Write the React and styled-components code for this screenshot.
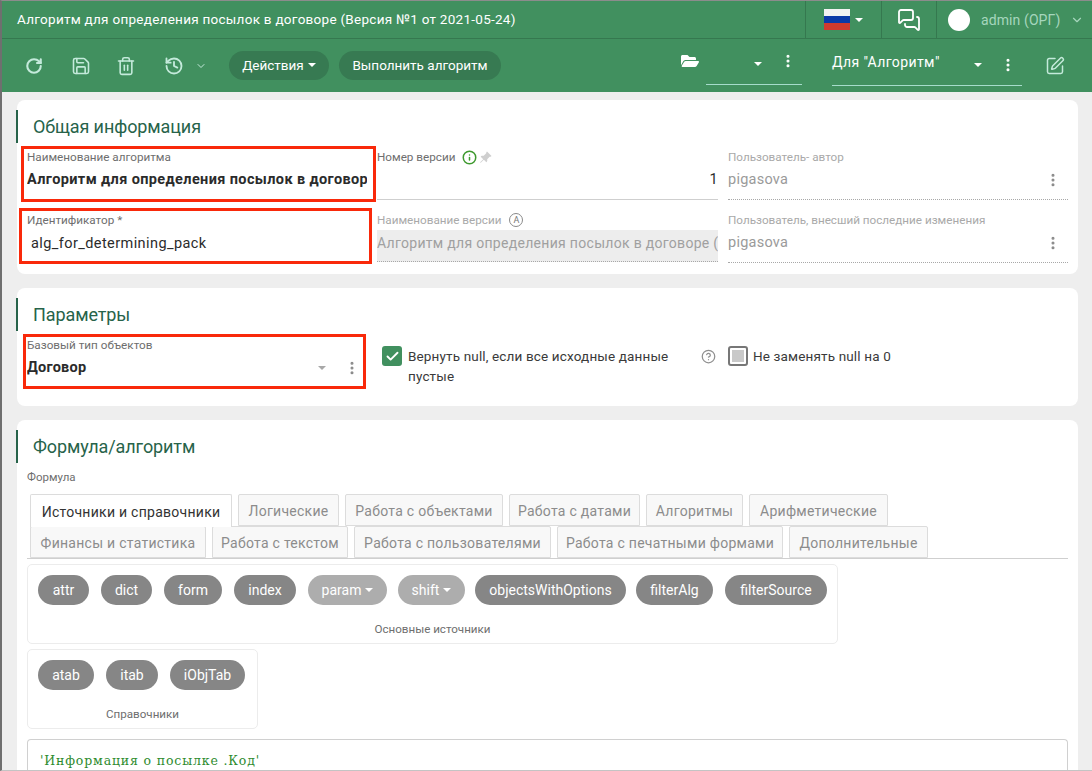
import React from 'react';
import styled, { createGlobalStyle } from 'styled-components';
import { RotateCw, Save, Trash2, History, ChevronDown, MessagesSquare, SquarePen, EllipsisVertical, Info, CircleHelp, Check } from 'lucide-react';
import { FaFolderOpen } from 'react-icons/fa';
import { BsPinAngleFill } from 'react-icons/bs';

const Global = createGlobalStyle`
  html, body { margin: 0; padding: 0; background: #eeeeee; }
  body { font-family: Roboto, "Noto Sans", sans-serif; overflow: hidden; }
  * { box-sizing: border-box; }
`;

const Page = styled.div`
  width: 1092px; height: 771px; overflow: hidden; background: #eeeeee;
  border-left: 2px solid #6f6f6f; border-top: 1px solid #8c8c8c; border-bottom: 1px solid #c4c4c4; margin: 0;
  display: flex; flex-direction: column;
`;
const Header = styled.header`
  background: #41905f; color: #fff; flex: none;
`;
const TitleRow = styled.div`
  height: 38px; display: flex; align-items: stretch; border-bottom: 1px solid #35784f; padding-left: 15px;
`;
const Title = styled.div`
  flex: 1; font-size: 13.5px; line-height: 36px; white-space: nowrap; letter-spacing: .27px;
`;
const TopCell = styled.div`
  width: ${p => p.$w}px; border-left: 1px solid #35784f; display: flex; align-items: center; padding-left: ${p => p.$pl || 0}px; flex: none;
`;
const Flag = styled.div`
  width: 26px; height: 21px; background: linear-gradient(#f2f2f2 0 33%, #0b3aa8 33% 66%, #d03a2e 66%);
`;
const Caret = styled.span`
  display: inline-block; width: 0; height: 0; border-left: 4px solid transparent; border-right: 4px solid transparent;
  border-top: 4px solid ${p => p.$c || '#fff'}; margin-left: ${p => p.$ml || 0}px;
`;
const Avatar = styled.div`
  width: 22px; height: 22px; border-radius: 50%; background: #fff; flex: none;
`;
const UserName = styled.span`
  color: #a6d6bd; font-size: 14px; margin-left: 11px; white-space: nowrap; letter-spacing: .1px;
`;
const UserChevron = styled(ChevronDown)`
  margin-left: 10px; color: #a6d6bd; flex: none;
`;
const Toolbar = styled.div`
  height: 53px; display: flex; align-items: center; padding-left: 0; position: relative;
`;
const ToolIcon = styled.span`
  display: flex; align-items: center; justify-content: center; flex: none; color: ${p => p.$c || '#c4eadb'};
  width: ${p => p.$w}px; margin-left: ${p => p.$ml || 0}px; margin-top: ${p => p.$mt || 0}px;
`;
const Pill = styled.button`
  height: 29px; border: 0; border-radius: 15px; background: #377a52; color: #fff; font: inherit; font-size: 13.5px;
  display: inline-flex; align-items: center; justify-content: center; flex: none; padding: 0;
  width: ${p => p.$w}px; margin-left: ${p => p.$ml || 0}px; margin-top: -1px;
`;
const Select = styled.div`
  position: relative; width: ${p => p.$w}px; margin-left: ${p => p.$ml || 0}px; height: 34px; margin-top: ${p => p.$mt || 0}px;
  border-bottom: 1px solid #a6dccb; display: flex; align-items: center; font-size: 14px; flex: none; padding-bottom: 7px; white-space: nowrap; letter-spacing: .4px;
`;
const SelectText = styled.span` flex: 1; margin-top: -5px; `;
const SelectIcons = styled.span`
  display: flex; align-items: center; flex: none; margin-right: ${p => p.$mr}px; gap: ${p => p.$gap}px;
`;
const LiftedDots = styled.span` display: flex; margin-top: -6px; `;

const Main = styled.main`
  flex: 1; display: flex; flex-direction: column; gap: 14px; padding: 8px 14px 0 15px; min-height: 0; overflow: hidden;
`;
const Card = styled.section`
  flex: none; background: #fff; border-radius: 8px; padding: 10px 0 ${p => p.$pb || 0}px 10px;
`;
const SectionTitle = styled.h2`
  margin: 0 0 0 -11px; height: 33px; border-left: 2px solid #27634a; padding-left: 15px;
  font-size: 18px; font-weight: 400; color: #27634a; line-height: 33px; letter-spacing: -.1px;
`;
const FieldGrid = styled.div`
  display: grid; grid-template-columns: 340px 341px 340px; column-gap: 10px; row-gap: 13px; margin-top: 7px;
`;
const Field = styled.div`
  position: relative; height: 50px; display: flex; flex-direction: column; min-width: 0;
`;
const BaseField = styled(Field)` width: 340px; flex: none; `;
const Mark = styled.span`
  position: absolute; pointer-events: none; border: 3px solid #f9290a;
  left: ${p => p.$l}px; right: ${p => p.$r}px; top: ${p => p.$t}px; bottom: ${p => p.$b}px;
`;
const Label = styled.div`
  font-size: 11.7px; height: 14px; line-height: 14px; color: ${p => p.$muted ? '#a9a9a9' : '#6e6e6e'}; white-space: nowrap;
  display: flex; align-items: center; gap: 7px; flex: none;
`;
const Value = styled.div`
  margin-top: ${p => p.$mt ?? 4}px; height: 24px; line-height: 24px; font-size: 14.5px; white-space: nowrap; overflow: hidden;
  color: ${p => p.$c || '#2b2b2b'}; font-weight: ${p => p.$bold ? 700 : 400};
  padding-left: ${p => p.$pl || 0}px; letter-spacing: ${p => p.$ls ?? .25}px;
  display: flex; justify-content: ${p => p.$right ? 'flex-end' : 'space-between'}; align-items: center;
`;
const ValueDots = styled.span` display: flex; margin-right: 7px; `;
const Underline = styled.div`
  margin-top: auto; margin-bottom: ${p => p.$mb ?? 0}px; border-bottom: 1px ${p => p.$dotted ? 'dotted #a8a8a8' : 'solid #cfcfcf'};
`;
const Filled = styled.div`
  background: #ededed; height: 32px; margin-top: 3px; font-size: 14px; line-height: 26px; color: #a0a0a0; white-space: nowrap; overflow: hidden;
  border-bottom: 1px dotted #a8a8a8; letter-spacing: .3px;
`;
const AutoBadge = styled.span`
  width: 14px; height: 14px; border: 1px solid #8a8a8a; border-radius: 50%; font-size: 9px; line-height: 12px; text-align: center; color: #777; flex: none; margin-left: 1px;
`;
const PinIcon = styled(BsPinAngleFill)` margin-left: -5px; color: #cfcfcf; `;
const ParamRow = styled.div`
  display: flex; margin-top: 7px; height: 49px; align-items: flex-start;
`;
const CheckBox = styled.span`
  width: 20px; height: 20px; border-radius: 3px; flex: none; display: flex; align-items: center; justify-content: center;
  background: ${p => p.$on ? '#41905f' : '#fff'}; border: ${p => p.$on ? '0' : '2px solid #777'}; color: #fff;
`;
const Square = styled.span` width: 12px; height: 12px; background: #c9c9c9; `;
const CheckRow = styled.div`
  flex: none; width: ${p => p.$w}px; margin-left: ${p => p.$ml}px; margin-top: 8px; display: flex; gap: ${p => p.$gap}px;
  font-size: 13.5px; line-height: 20px; color: #3a3a3a; letter-spacing: .15px;
`;
const HelpIcon = styled.span` color: #8f8f8f; flex: none; margin-top: 11px; margin-left: 29px; width: 15px; display: flex; `;

const FormulaLabel = styled.div` font-size: 11.5px; color: #6e6e6e; line-height: 14px; margin-top: 7px; `;
const Tabs = styled.div`
  margin: 10px 0 0 0; width: 1041px; border-bottom: 1px solid #cfcfcf; padding-left: 3px;
`;
const TabRow = styled.div` display: flex; gap: 6px; height: 32px; `;
const Tab = styled.div`
  border: 1px solid #dcdcdc; border-bottom: ${p => p.$active ? '0' : '1px solid #dcdcdc'}; border-radius: 2px 2px 0 0;
  background: ${p => p.$active ? '#fff' : '#f8f8f8'}; color: ${p => p.$active ? '#333' : '#8c8c8c'};
  font-size: 14px; display: flex; align-items: center; justify-content: center; white-space: nowrap; letter-spacing: .27px;
  width: ${p => p.$w}px; position: relative; z-index: ${p => p.$active ? 1 : 0}; height: ${p => p.$active ? 33 : 32}px; padding-top: 2px;
`;
const Group = styled.div`
  width: ${p => p.$w}px; height: 80px; border: 1px solid #ececec; border-radius: 5px; margin-top: ${p => p.$mt}px;
  padding: 10px 0 0 10px;
`;
const ChipRow = styled.div` display: flex; height: 30px; `;
const Chip = styled.button`
  height: 30px; border: 0; border-radius: 15px; padding: 0; font: inherit; font-size: 14px; color: #fff; flex: none;
  background: ${p => p.$light ? '#adadad' : '#868686'}; width: ${p => p.$w}px; margin-right: ${p => p.$mr ?? 12}px;
  display: inline-flex; align-items: center; justify-content: center;
`;
const Caption = styled.div`
  text-align: center; font-size: 11.6px; color: #6e6e6e; margin: 16px 10px 0 0; line-height: 16px;
`;
const Code = styled.div`
  width: 1041px; margin-top: 10px; height: 60px; border: 1px solid #d0d0d0; border-bottom: 0; border-radius: 4px 4px 0 0;
  padding: 13px 12px; font-family: "DejaVu Serif", serif; font-size: 12.5px; letter-spacing: .85px; line-height: 16px; color: #2e8b2e; white-space: pre;
`;

const Dots = ({ c = '#8a8a8a', s = 18 }) => <EllipsisVertical size={s} color={c} strokeWidth={2.6} />;

export default function App() {
  return (
    <Page>
      <Global />
      <Header>
        <TitleRow>
          <Title>Алгоритм для определения посылок в договоре (Версия №1 от 2021-05-24)</Title>
          <TopCell $w={76} $pl={18}><Flag /><Caret $ml={5} /></TopCell>
          <TopCell $w={55} $pl={15}><MessagesSquare size={24} color="#fff" strokeWidth={1.8} /></TopCell>
          <TopCell $w={156} $pl={11}>
            <Avatar /><UserName>admin (ОРГ)</UserName>
            <UserChevron size={14} />
          </TopCell>
        </TitleRow>
        <Toolbar>
          <ToolIcon $w={20} $ml={22}><RotateCw size={18} strokeWidth={2.8} /></ToolIcon>
          <ToolIcon $w={22} $ml={26}><Save size={20} strokeWidth={1.9} /></ToolIcon>
          <ToolIcon $w={20} $ml={24}><Trash2 size={20} strokeWidth={1.9} /></ToolIcon>
          <ToolIcon $w={24} $ml={26}><History size={20} strokeWidth={2.2} /></ToolIcon>
          <ToolIcon $w={14} $ml={8}><ChevronDown size={12} strokeWidth={2} /></ToolIcon>
          <Pill $w={100} $ml={21}>Действия<Caret $ml={4} /></Pill>
          <Pill $w={162} $ml={10}>Выполнить алгоритм</Pill>
          <ToolIcon $w={18} $ml={180} $mt={-10} $c="#fff"><FaFolderOpen size={18} /></ToolIcon>
          <Select $w={96} $ml={7} $mt={4}>
            <SelectText />
            <SelectIcons $mr={6} $gap={18}><Caret /><LiftedDots><Dots c="#fff" s={16} /></LiftedDots></SelectIcons>
          </Select>
          <Select $w={190} $ml={30} $mt={6}>
            <SelectText>Для "Алгоритм"</SelectText>
            <SelectIcons $mr={6} $gap={18}><Caret /><Dots c="#fff" s={16} /></SelectIcons>
          </Select>
          <ToolIcon $w={22} $ml={22}><SquarePen size={20} strokeWidth={1.8} /></ToolIcon>
        </Toolbar>
      </Header>
      <Main>
        <Card $pb={11}>
          <SectionTitle>Общая информация</SectionTitle>
          <FieldGrid>
            <Field>
              <Mark $l={-6} $r={-9} $t={-4} $b={-2} />
              <Label>Наименование алгоритма</Label>
              <Value $bold $ls={.38}>Алгоритм для определения посылок в договоре</Value>
            </Field>
            <Field>
              <Label>Номер версии <Info size={15} color="#3f9a2f" strokeWidth={2.4} /><PinIcon size={13} /></Label>
              <Value $right>1</Value>
              <Underline />
            </Field>
            <Field>
              <Label $muted>Пользователь- автор</Label>
              <Value $c="#9a9a9a">pigasova<ValueDots><Dots s={16} /></ValueDots></Value>
              <Underline $dotted />
            </Field>
            <Field>
              <Mark $l={-8} $r={-5} $t={-5} $b={-1} />
              <Label>Идентификатор *</Label>
              <Value $pl={4} $mt={5} $ls={.42}>alg_for_determining_pack</Value>
            </Field>
            <Field>
              <Label $muted>Наименование версии <AutoBadge>A</AutoBadge></Label>
              <Filled>Алгоритм для определения посылок в договоре (Версия №1)</Filled>
            </Field>
            <Field>
              <Label $muted>Пользователь, внесший последние изменения</Label>
              <Value $c="#9a9a9a">pigasova<ValueDots><Dots s={16} /></ValueDots></Value>
              <Underline $dotted />
            </Field>
          </FieldGrid>
        </Card>
        <Card $pb={19}>
          <SectionTitle>Параметры</SectionTitle>
          <ParamRow>
            <BaseField>
              <Mark $l={-4} $r={1} $t={-4} $b={-1} />
              <Label>Базовый тип объектов</Label>
              <Value $bold>
                Договор
                <SelectIcons $mr={7} $gap={18}><Caret $c="#a8a8a8" /><Dots s={16} /></SelectIcons>
              </Value>
            </BaseField>
            <CheckRow $w={290} $ml={15} $gap={6}>
              <CheckBox $on><Check size={15} strokeWidth={3} /></CheckBox>
              <span>Вернуть null, если все исходные данные пустые</span>
            </CheckRow>
            <HelpIcon><CircleHelp size={15} /></HelpIcon>
            <CheckRow $w={180} $ml={12} $gap={5}>
              <CheckBox><Square /></CheckBox>
              <span>Не заменять null на 0</span>
            </CheckRow>
          </ParamRow>
        </Card>
        <Card>
          <SectionTitle>Формула/алгоритм</SectionTitle>
          <FormulaLabel>Формула</FormulaLabel>
          <Tabs>
            <TabRow>
              <Tab $active $w={202}>Источники и справочники</Tab>
              <Tab $w={101}>Логические</Tab>
              <Tab $w={158}>Работа с объектами</Tab>
              <Tab $w={131}>Работа с датами</Tab>
              <Tab $w={97}>Алгоритмы</Tab>
              <Tab $w={139}>Арифметические</Tab>
            </TabRow>
            <TabRow>
              <Tab $w={176}>Финансы и статистика</Tab>
              <Tab $w={136}>Работа с текстом</Tab>
              <Tab $w={197}>Работа с пользователями</Tab>
              <Tab $w={226}>Работа с печатными формами</Tab>
              <Tab $w={139}>Дополнительные</Tab>
            </TabRow>
          </Tabs>
          <Group $w={811} $mt={5}>
            <ChipRow>
              <Chip $w={51}>attr</Chip>
              <Chip $w={51}>dict</Chip>
              <Chip $w={58}>form</Chip>
              <Chip $w={62}>index</Chip>
              <Chip $light $w={79} $mr={11}>param<Caret $ml={4} /></Chip>
              <Chip $light $w={67} $mr={10}>shift<Caret $ml={4} /></Chip>
              <Chip $w={151} $mr={10}>objectsWithOptions</Chip>
              <Chip $w={77}>filterAlg</Chip>
              <Chip $w={102}>filterSource</Chip>
            </ChipRow>
            <Caption>Основные источники</Caption>
          </Group>
          <Group $w={231} $mt={5}>
            <ChipRow>
              <Chip $w={56}>atab</Chip>
              <Chip $w={52}>itab</Chip>
              <Chip $w={75}>iObjTab</Chip>
            </ChipRow>
            <Caption>Справочники</Caption>
          </Group>
          <Code>'Информация о посылке .Код'</Code>
        </Card>
      </Main>
    </Page>
  );
}
